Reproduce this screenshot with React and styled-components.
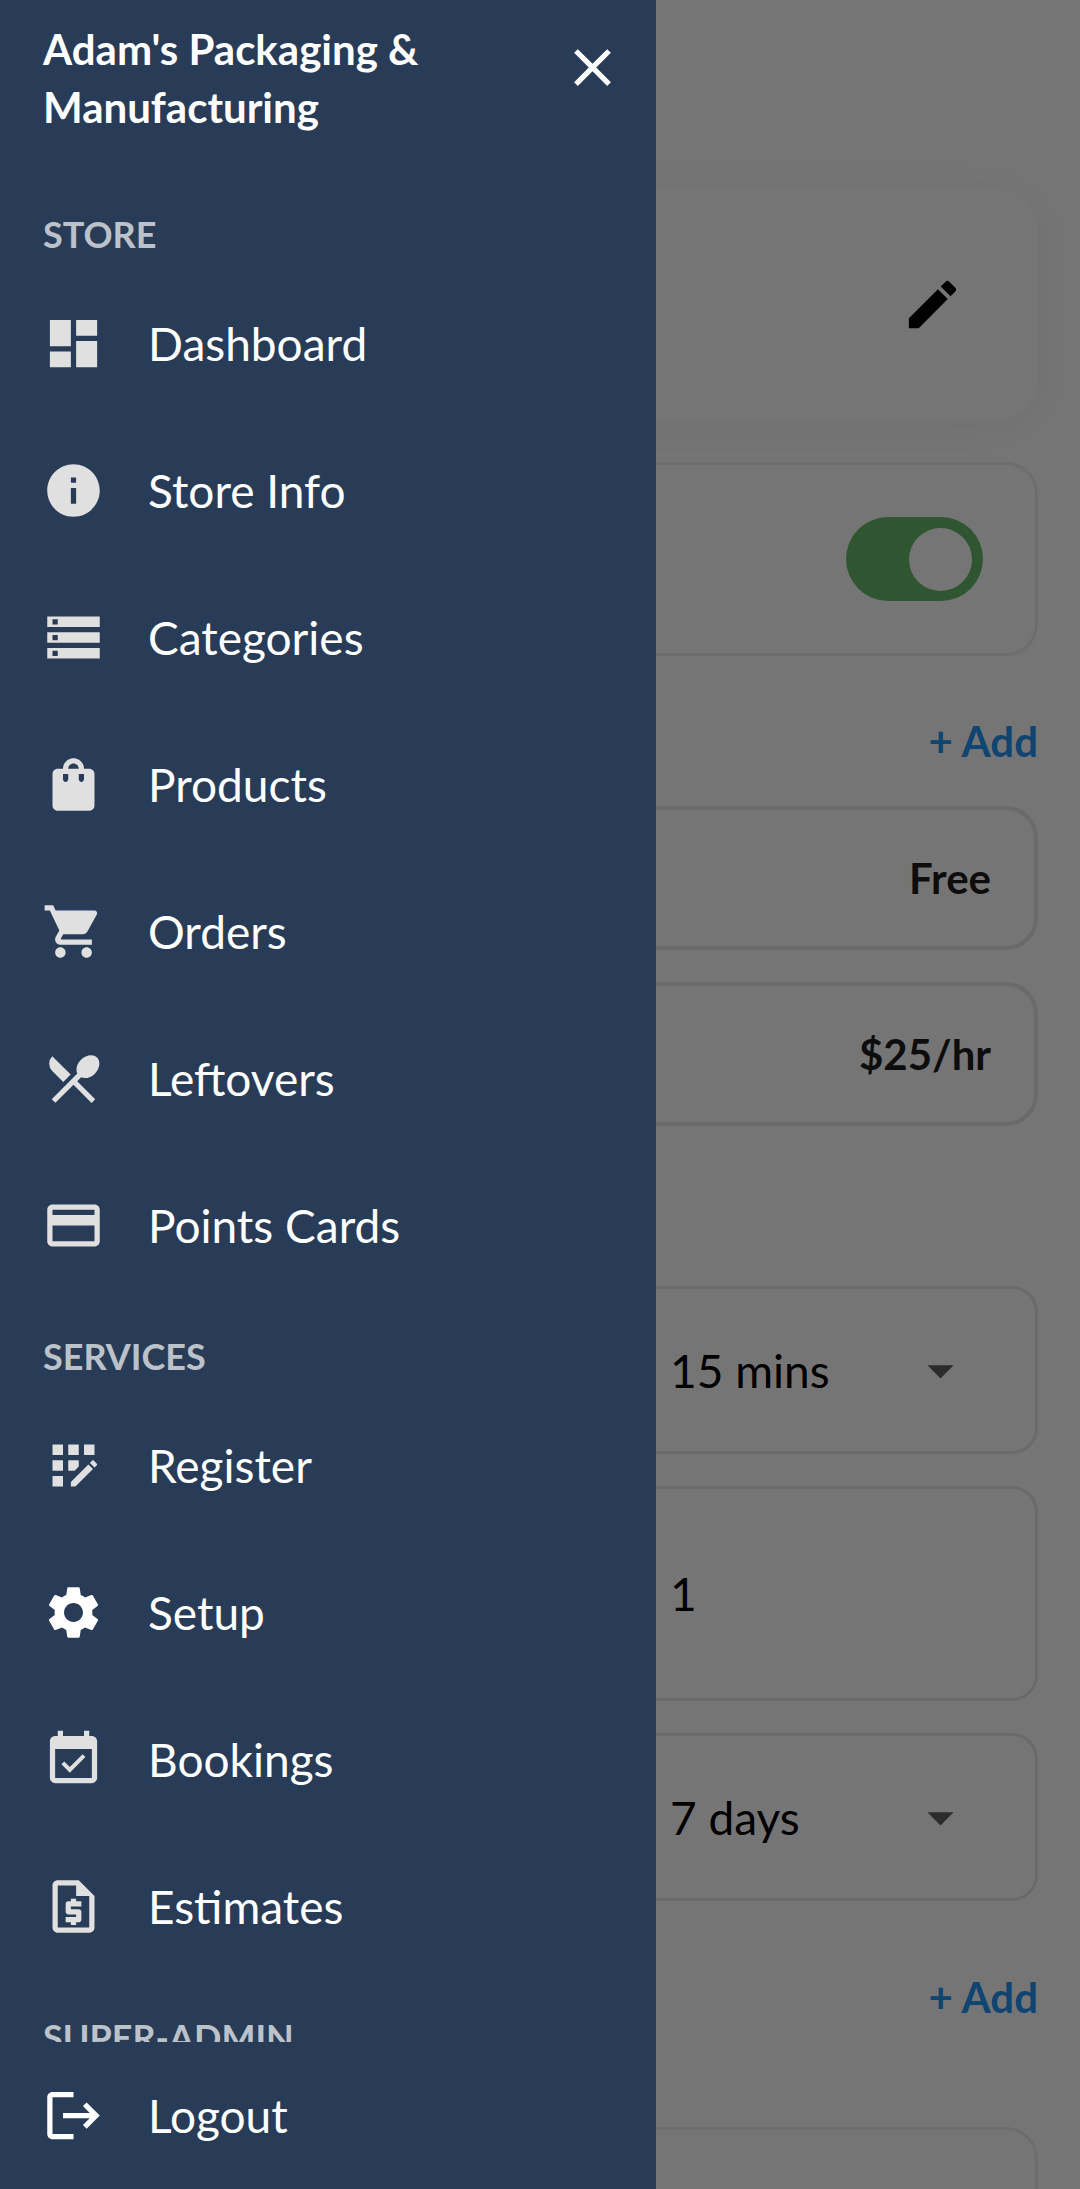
import React from 'react'
import { styled, createGlobalStyle } from 'styled-components';
import {
    MdAppRegistration,
    MdArrowDropDown,
    MdClose,
    MdDashboard,
    MdEdit,
    MdEventAvailable,
    MdInfo,
    MdLogout,
    MdOutlineRequestQuote,
    MdPayment,
    MdRestaurantMenu,
    MdSettings,
    MdShoppingBag,
    MdShoppingCart,
    MdStorage,
} from 'react-icons/md';

const GlobalStyles = createGlobalStyle`
    *, *::before, *::after {
        box-sizing: border-box;
    }
    body {
        margin: 0;
        background-color: #fff;
        font-family: "Lato", sans-serif;
    }
    button, input, select {
        font-family: inherit;
        margin: 0;
        padding: 0;
        border: none;
        background: none;
        color: inherit;
    }
    h1, h2, ul {
        margin: 0;
        padding: 0;
    }
    ul {
        list-style: none;
    }
`;

const Shell = styled.div`
    height: 100vh;
    overflow: hidden;
`;

const Page = styled.main`
    display: flex;
    flex-direction: column;
    padding: 188px 42px 0;
`;

const ProfileCard = styled.section`
    display: flex;
    align-items: center;
    justify-content: flex-end;
    height: 232px;
    padding-right: 74px;
    border-radius: 42px;
    background-color: #fff;
    box-shadow: 0 5px 52px rgba(0, 0, 0, 0.05);
    margin-bottom: 42px;
`;

const IconButton = styled.button`
    display: flex;
    flex-shrink: 0;
    font-size: 63px;
    cursor: pointer;
`;

const ToggleCard = styled.section`
    display: flex;
    align-items: center;
    justify-content: flex-end;
    height: 194px;
    padding-right: 52px;
    border: 3px solid #eee;
    border-radius: 32px;
`;

const Switch = styled.input`
    appearance: none;
    display: flex;
    align-items: center;
    justify-content: flex-start;
    width: 137px;
    height: 84px;
    padding: 0 11px;
    border-radius: 42px;
    background-color: #bdbdbd;
    cursor: pointer;
    &::before {
        content: "";
        width: 63px;
        height: 63px;
        border-radius: 50%;
        background-color: #fff;
    }
    &:checked {
        justify-content: flex-end;
        background-color: #66bb6a;
    }
`;

const SectionBar = styled.div`
    display: flex;
    justify-content: flex-end;
    padding: ${props => props.$roomy ? '66px 0 100px' : '55px 0 35px'};
`;

const AddButton = styled.button`
    font-size: 42px;
    font-weight: 700;
    line-height: 60px;
    color: #2196f3;
    cursor: pointer;
`;

const Stack = styled.section`
    display: flex;
    flex-direction: column;
    gap: 32px;
    margin-bottom: ${props => props.$spaced ? '160px' : '0'};
`;

const PriceCard = styled.div`
    display: flex;
    align-items: center;
    justify-content: flex-end;
    height: 144px;
    padding-right: 43px;
    border: 4px solid #e6e6e6;
    border-radius: 32px;
    font-size: 42px;
    font-weight: 700;
    color: #1e1e1e;
`;

const Field = styled.div`
    display: flex;
    align-items: center;
    justify-content: flex-end;
    height: ${props => props.$tall ? '215px' : '168px'};
    padding-right: 63px;
    border: 3px solid #e6e6e6;
    border-radius: 26px;
`;

const SelectWrap = styled.div`
    display: grid;
    align-items: center;
    width: 302px;
    > * {
        grid-area: 1 / 1;
    }
    svg {
        justify-self: end;
        font-size: 63px;
        color: #616161;
        pointer-events: none;
    }
`;

const Select = styled.select`
    appearance: none;
    width: 100%;
    height: 63px;
    font-size: 46px;
    color: #000;
`;

const TextInput = styled.input`
    width: 302px;
    height: 63px;
    font-size: 46px;
    color: #000;
`;

const EmptyCard = styled.section`
    height: 194px;
    border: 3px solid #eee;
    border-radius: 32px;
`;

const Overlay = styled.div`
    position: fixed;
    inset: 0;
    background-color: rgba(0, 0, 0, 0.54);
`;

const Drawer = styled.aside`
    position: fixed;
    inset: 0 auto 0 0;
    display: flex;
    flex-direction: column;
    width: 656px;
    max-width: 85vw;
    background-color: #293c57;
    color: #fff;
`;

const DrawerHeader = styled.header`
    display: flex;
    align-items: flex-start;
    justify-content: space-between;
    gap: 32px;
    padding: 20px 32px 41px 43px;
    ${IconButton} {
        margin-top: 16px;
    }
`;

const StoreName = styled.h1`
    font-size: 42px;
    font-weight: 700;
    line-height: 58px;
`;

const DrawerNav = styled.nav`
    flex: 1;
    min-height: 0;
    overflow-y: auto;
    scrollbar-width: none;
`;

const GroupTitle = styled.h2`
    padding: 35px 43px 14px;
    font-size: 36px;
    font-weight: 700;
    line-height: 44px;
    color: rgba(255, 255, 255, 0.7);
`;

const MenuLink = styled.a`
    display: flex;
    align-items: center;
    gap: 43px;
    height: 147px;
    padding: 0 42px;
    font-size: 46px;
    color: #fff;
    text-decoration: none;
    svg {
        flex-shrink: 0;
        font-size: 63px;
        color: ${props => props.$bright ? '#fff' : '#e0e0e0'};
    }
`;

const groups = [
    {
        title: 'STORE',
        items: [
            { label: 'Dashboard', icon: MdDashboard },
            { label: 'Store Info', icon: MdInfo },
            { label: 'Categories', icon: MdStorage },
            { label: 'Products', icon: MdShoppingBag },
            { label: 'Orders', icon: MdShoppingCart },
            { label: 'Leftovers', icon: MdRestaurantMenu },
            { label: 'Points Cards', icon: MdPayment },
        ],
    },
    {
        title: 'SERVICES',
        items: [
            { label: 'Register', icon: MdAppRegistration },
            { label: 'Setup', icon: MdSettings, active: true },
            { label: 'Bookings', icon: MdEventAvailable },
            { label: 'Estimates', icon: MdOutlineRequestQuote },
        ],
    },
    { title: 'SUPER-ADMIN', items: [] },
];

const prices = ['Free', '$25/hr'];

const MenuItem = ({ label, icon: Icon, bright }) => (
    <MenuLink href="#" $bright={bright}>
        <Icon />
        <span>{label}</span>
    </MenuLink>
)

const SelectField = ({ label, value }) => (
    <Field>
        <SelectWrap>
            <Select aria-label={label} defaultValue={value}>
                <option>{value}</option>
            </Select>
            <MdArrowDropDown />
        </SelectWrap>
    </Field>
)

const SetupPage = () => {
    return (
        <Page>
            <ProfileCard>
                <IconButton aria-label="Edit"><MdEdit /></IconButton>
            </ProfileCard>
            <ToggleCard>
                <Switch type="checkbox" aria-label="Enabled" defaultChecked />
            </ToggleCard>

            <SectionBar>
                <AddButton>+ Add</AddButton>
            </SectionBar>
            <Stack $spaced>
                {prices.map(price => <PriceCard key={price}>{price}</PriceCard>)}
            </Stack>

            <Stack>
                <SelectField label="Interval" value="15 mins" />
                <Field $tall>
                    <TextInput aria-label="Quantity" defaultValue="1" />
                </Field>
                <SelectField label="Period" value="7 days" />
            </Stack>

            <SectionBar $roomy>
                <AddButton>+ Add</AddButton>
            </SectionBar>
            <EmptyCard />
        </Page>
    )
}

const SideDrawer = () => {
    return (
        <Drawer>
            <DrawerHeader>
                <StoreName>Adam's Packaging &amp; Manufacturing</StoreName>
                <IconButton aria-label="Close menu"><MdClose /></IconButton>
            </DrawerHeader>
            <DrawerNav>
                {groups.map(group => (
                    <section key={group.title}>
                        <GroupTitle>{group.title}</GroupTitle>
                        <ul>
                            {group.items.map(item => (
                                <li key={item.label}>
                                    <MenuItem label={item.label} icon={item.icon} bright={item.active} />
                                </li>
                            ))}
                        </ul>
                    </section>
                ))}
            </DrawerNav>
            <MenuItem label="Logout" icon={MdLogout} bright />
        </Drawer>
    )
}

const App = () => {
    return (
        <Shell>
            <GlobalStyles />
            <SetupPage />
            <Overlay />
            <SideDrawer />
        </Shell>
    )
}

export default App
